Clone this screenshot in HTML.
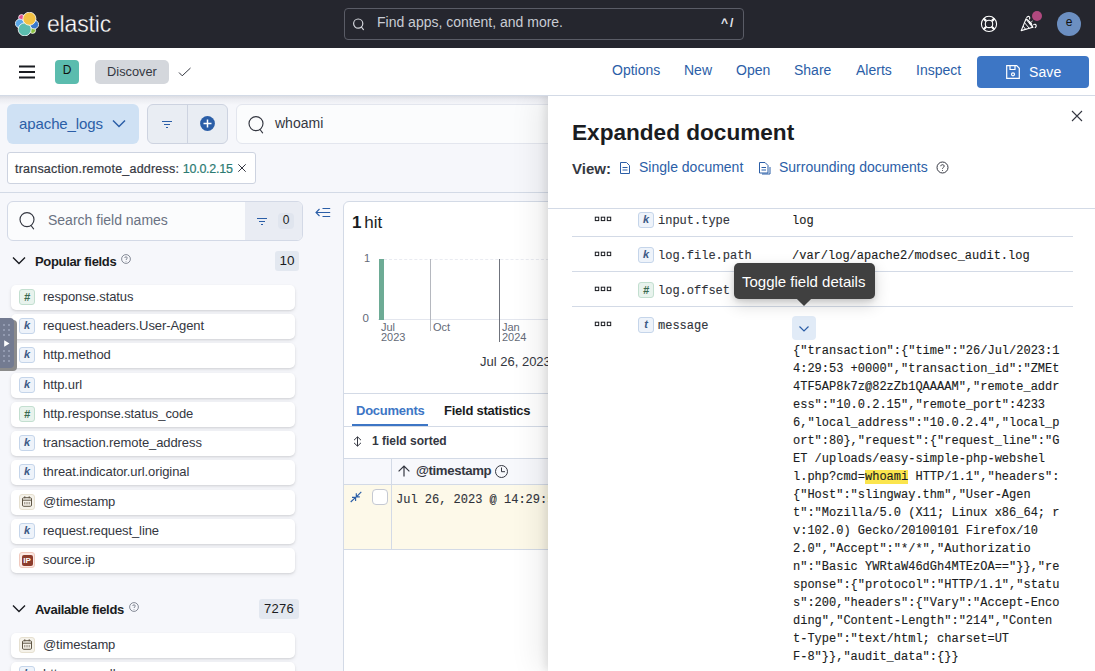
<!DOCTYPE html>
<html>
<head>
<meta charset="utf-8">
<style>
*{box-sizing:border-box;margin:0;padding:0}
html,body{width:1095px;height:671px;overflow:hidden;background:#f6f7fb;font-family:"Liberation Sans",sans-serif;color:#343741}
.abs{position:absolute}
#topbar{z-index:6;position:absolute;left:0;top:0;width:1095px;height:48px;background:#25262e}
#bar2{z-index:5;position:absolute;left:0;top:48px;width:1095px;height:48px;background:#fff;border-bottom:1px solid #d3dae6}
.navlink{position:absolute;top:62px;font-size:14px;color:#2b5ea7;line-height:18px}
#flyout{position:absolute;left:548px;top:96px;width:547px;height:575px;background:#fff;box-shadow:-3px 0 8px rgba(0,0,0,.09),-10px 0 28px rgba(0,0,0,.08)}
.frow{position:absolute;left:24px;width:501px;border-top:1px solid #d3dae6}
.mono{font-family:"Liberation Mono",monospace;font-size:12px;color:#1a1c21;-webkit-text-stroke:0.120px #1a1c21}
.field{position:absolute;left:11px;width:284px;height:25px;background:#fff;border-radius:5px;box-shadow:0 1px 2px rgba(0,0,0,.09),0 2px 4px rgba(0,0,0,.07);font-size:13px;line-height:24px;color:#343741;letter-spacing:-0.090px}
.field span.n{position:absolute;left:32px;top:0;white-space:nowrap}
.tok{position:absolute;left:4px;top:4px;width:16px;height:16px;border-radius:3px;border:1px solid #c5d5ea;background:#eef3fa;font-size:11px;line-height:13px;text-align:center;font-weight:bold;font-style:italic;color:#3c5a85;letter-spacing:0}
.tok.num{background:#e8f3ed;border-color:#c3dfd0;color:#39694f;font-size:11px;line-height:14px}
.tok.date{background:#f5f2ea;border-color:#e6e0d0;padding-top:0.500px;line-height:0}
.tok.ip{background:#fbeae5;border-color:#f0c9bd;line-height:0;padding:1.500px 1.500px}
.tok.ip span{display:block;width:11px;height:11px;border-radius:2px;background:#8c3c2c;color:#fff;font:bold 8px/11px "Liberation Sans",sans-serif;font-style:normal;text-align:center;letter-spacing:0}
mark{background:#fbe54d;color:inherit}
</style>
</head>
<body>
<div id="topbar">
<svg class="abs" style="left:15px;top:12px" width="24" height="24" viewBox="0 0 24 24" stroke="#fff" stroke-width="0.800">
<circle cx="6.600" cy="5.600" r="3" fill="#e0508f"/>
<circle cx="17.600" cy="18.400" r="3" fill="#8bbf3f"/>
<circle cx="4.800" cy="11.500" r="4.400" fill="#5aa8e8"/>
<circle cx="19.200" cy="12.500" r="4.400" fill="#3a78cc"/>
<circle cx="9.700" cy="17.400" r="6.500" fill="#5bbcae"/>
<circle cx="14.400" cy="6.700" r="6.500" fill="#f2c143"/>
</svg>
<div class="abs" style="left:47px;top:9px;font-size:24px;line-height:30px;color:#fff;letter-spacing:-0.2px;transform-origin:0 50%;transform:scaleX(0.96);-webkit-text-stroke:0.350px #25262e">elastic</div>
<div class="abs" style="left:344px;top:8px;width:400px;height:32px;border:1px solid #5a5c66;border-radius:4px;background:#25262e"></div>
<svg class="abs" style="left:351px;top:16px" width="16" height="16" viewBox="0 0 16 16" fill="none" stroke="#d4d6dc" stroke-width="1.2"><circle cx="7.2" cy="7.6" r="4.6"/><path d="M10.4 11l2 2.6" stroke-linecap="round"/></svg>
<div class="abs" style="left:377px;top:13px;font-size:14px;line-height:18px;color:#c9ccd4;white-space:nowrap">Find apps, content, and more.</div>
<div class="abs" style="left:721px;top:15px;font-size:12px;line-height:16px;color:#e6e8ee;font-weight:bold;letter-spacing:2px;white-space:nowrap">^/</div>
<svg class="abs" style="left:979px;top:14px" width="20" height="20" viewBox="0 0 20 20" fill="none" stroke="#fff" stroke-width="1.100"><circle cx="10" cy="9.900" r="7.600"/><circle cx="10" cy="9.900" r="3.700"/><path d="M12.76 12.76L15.30 15.30M7.24 12.76L4.70 15.30M7.24 7.24L4.70 4.70M12.76 7.24L15.30 4.70" stroke-width="2.200" transform="translate(0,-0.100)"/></svg>
<svg class="abs" style="left:1019px;top:14px" width="20" height="20" viewBox="0 0 20 20" fill="none" stroke="#fff" stroke-width="1.100" stroke-linejoin="round" stroke-linecap="round"><path d="M7 5L2.200 16.600l11.600-3.300z"/><path d="M7 5c1.800 0.300 6 4.500 6.800 8.300"/><path d="M5.600 8.800l4.600 5.400M4.200 12.300l2.400 3" stroke-width="1"/><path d="M7.800 3.600c0.300-1.300 2-1.600 2.700-0.600 0.400 0.600 0.400 1.400 0 2.100M14.700 10.600c1-0.700 2.300-0.200 2.500 0.900 0.100 0.800-0.300 1.600-1 2.200"/><path d="M13.300 7.200l-2.700 2.400M10.600 7.700v1.900h1.900" stroke-width="0.900"/></svg>
<div class="abs" style="left:1032px;top:11px;width:10px;height:10px;border-radius:5px;background:#b0497f"></div>
<div class="abs" style="left:1057px;top:12px;width:24px;height:24px;border-radius:12px;background:#6c8fc1;color:#111;font-size:12px;line-height:21px;text-align:center">e</div>
</div>
<div id="bar2">
<svg class="abs" style="left:18px;top:16px" width="18" height="16" viewBox="0 0 18 16" stroke="#1a1c21" stroke-width="1.8"><path d="M1 2.500h16M1 8h16M1 13.500h16"/></svg>
<div class="abs" style="left:55px;top:12px;width:24px;height:24px;border-radius:4px;background:#5bbcae;color:#111;font-size:12px;line-height:21px;text-align:center">D</div>
<div class="abs" style="left:95px;top:12px;width:74px;height:24px;border-radius:5px;background:#d4d7dc;color:#343741;font-size:12.800px;line-height:24px;text-align:center">Discover</div>
<svg class="abs" style="left:178px;top:19px" width="14" height="10" viewBox="0 0 14 10" fill="none" stroke="#343741" stroke-width="1"><path d="M1 5.500l3.200 3.300L12.500 1"/></svg>
<div class="navlink" style="left:612px;top:13px">Options</div>
<div class="navlink" style="left:684px;top:13px">New</div>
<div class="navlink" style="left:736px;top:13px">Open</div>
<div class="navlink" style="left:794px;top:13px">Share</div>
<div class="navlink" style="left:856px;top:13px">Alerts</div>
<div class="navlink" style="left:916px;top:13px">Inspect</div>
<div class="abs" style="left:977px;top:8px;width:112px;height:32px;border-radius:4px;background:#3d76c5"></div>
<svg class="abs" style="left:1005px;top:16px" width="16" height="16" viewBox="0 0 16 16" fill="none" stroke="#fff" stroke-width="1.200"><path d="M1.700 1.700h10l2.600 2.600v10H1.700z"/><path d="M5 1.700v3.800h5V1.700"/><circle cx="8" cy="10.300" r="1.500"/></svg>
<div class="abs" style="left:1029px;top:14px;font-size:14px;line-height:20px;color:#fff;letter-spacing:0.100px">Save</div>
</div>
<div class="abs" style="left:0;top:96px;width:1095px;height:9px;background:linear-gradient(rgba(40,45,70,.13),rgba(40,45,70,.05) 40%,rgba(40,45,70,0))"></div>
<div id="left">
<div class="abs" style="left:7px;top:104px;width:132px;height:40px;border-radius:6px;background:#cfe1f4"></div>
<div class="abs" style="left:19px;top:114px;font-size:15px;line-height:20px;color:#2b5ea7;white-space:nowrap;letter-spacing:-0.100px">apache_logs</div>
<svg class="abs" style="left:112px;top:119px" width="14" height="10" viewBox="0 0 14 10" fill="none" stroke="#2b5ea7" stroke-width="1.500"><path d="M1 1.500l6 6 6-6"/></svg>
<div class="abs" style="left:147px;top:104px;width:81px;height:40px;border-radius:6px;background:#e9edf3;border:1px solid #cdd3e0"></div>
<div class="abs" style="left:187px;top:105px;width:1px;height:38px;background:#cdd3e0"></div>
<svg class="abs" style="left:162px;top:120px" width="10" height="9" viewBox="0 0 10 9" stroke="#2b5ea7" stroke-width="1"><path d="M0 1.500h10M2 4.500h6M4 7.500h2"/></svg>
<svg class="abs" style="left:199px;top:115px" width="17" height="17" viewBox="0 0 17 17"><circle cx="8.500" cy="8.500" r="7.400" fill="#2b5ea7"/><path d="M8.500 4.500v8M4.500 8.500h8" stroke="#fff" stroke-width="1.500"/></svg>
<div class="abs" style="left:236px;top:104px;width:330px;height:40px;border-radius:6px;background:#fbfcfd;border:1px solid #e3e6ee"></div>
<svg class="abs" style="left:246px;top:114px" width="20" height="20" viewBox="0 0 20 20" fill="none" stroke="#343741" stroke-width="1.150"><circle cx="10" cy="9.600" r="7"/><path d="M14 15.500l2.600 3.300" stroke-linecap="round"/></svg>
<div class="abs" style="left:275px;top:113px;font-size:14px;line-height:20px;color:#343741">whoami</div>
<div class="abs" style="left:7px;top:152px;width:249px;height:32px;border-radius:3px;background:#fff;border:1px solid #cdd3e0"></div>
<div class="abs" style="left:15px;top:160px;font-size:12.500px;line-height:18px;color:#343741;white-space:nowrap;letter-spacing:0.210px;-webkit-text-stroke:0.200px">transaction.remote_address: <span style="color:#2c7b72;letter-spacing:-0.250px">10.0.2.15</span></div>
<svg class="abs" style="left:238px;top:164px" width="8" height="8" viewBox="0 0 8 8" stroke="#343741" stroke-width="1"><path d="M0.300 0.300l7.400 7.400M7.700 0.300l-7.400 7.400"/></svg>
<div class="abs" style="left:0;top:192px;width:548px;height:1px;background:#d3dae6"></div>
<div class="abs" style="left:7px;top:201px;width:296px;height:40px;border-radius:6px;background:#fbfcfd;border:1px solid #d3d9e6"></div>
<div class="abs" style="left:245px;top:202px;width:57px;height:38px;border-radius:0 5px 5px 0;background:#e9ecf3"></div>
<svg class="abs" style="left:17px;top:210px" width="20" height="20" viewBox="0 0 20 20" fill="none" stroke="#343741" stroke-width="1.150"><circle cx="10" cy="9.600" r="7"/><path d="M14 15.500l2.600 3.300" stroke-linecap="round"/></svg>
<div class="abs" style="left:48px;top:211px;font-size:14px;line-height:18px;color:#6a7282;white-space:nowrap">Search field names</div>
<svg class="abs" style="left:257px;top:217px" width="10" height="9" viewBox="0 0 10 9" stroke="#2b5ea7" stroke-width="1"><path d="M0 1.500h10M2 4.500h6M4 7.500h2"/></svg>
<div class="abs" style="left:278px;top:213px;width:16px;height:16px;border-radius:4px;background:#e0e5ee;font-size:12px;line-height:15px;text-align:center;color:#1a1c21">0</div>
<svg class="abs" style="left:315px;top:206px" width="16" height="14" viewBox="0 0 16 14" fill="none" stroke="#2b5ea7" stroke-width="1.100"><path d="M1.200 6.500h14M4.500 3L1 6.500 4.500 10M7.500 2.500h7.700M7.500 10.500h7.700"/></svg>
<svg class="abs" style="left:12px;top:256px" width="14" height="10" viewBox="0 0 14 10" fill="none" stroke="#1a1c21" stroke-width="1.400"><path d="M1 1.500l6 6 6-6"/></svg>
<div class="abs" style="left:35px;top:253px;font-size:13px;line-height:18px;color:#1a1c21;font-weight:bold;white-space:nowrap;letter-spacing:-0.330px">Popular fields</div>
<svg class="abs" style="left:121px;top:254px" width="10" height="10" viewBox="0 0 10 10" fill="none" stroke="#69707d" stroke-width="0.800"><circle cx="5" cy="5" r="4.400"/><path d="M3.700 4c0-1.600 2.600-1.600 2.600 0 0 0.900-1.300 0.900-1.300 2M5 7.300v0.600"/></svg>
<div class="abs" style="left:275px;top:251px;width:24px;height:20px;border-radius:3px;background:#e3e8f0;font-size:13.500px;line-height:20px;text-align:center;color:#1a1c21">10</div>
<svg class="abs" style="left:12px;top:604px" width="14" height="10" viewBox="0 0 14 10" fill="none" stroke="#1a1c21" stroke-width="1.400"><path d="M1 1.500l6 6 6-6"/></svg>
<div class="abs" style="left:35px;top:601px;font-size:13px;line-height:18px;color:#1a1c21;font-weight:bold;white-space:nowrap;letter-spacing:-0.330px">Available fields</div>
<svg class="abs" style="left:129px;top:602px" width="10" height="10" viewBox="0 0 10 10" fill="none" stroke="#69707d" stroke-width="0.800"><circle cx="5" cy="5" r="4.400"/><path d="M3.700 4c0-1.600 2.600-1.600 2.600 0 0 0.900-1.300 0.900-1.300 2M5 7.300v0.600"/></svg>
<div class="abs" style="left:259px;top:599px;width:40px;height:20px;border-radius:3px;background:#e3e8f0;font-size:13px;line-height:20px;text-align:center;color:#1a1c21;letter-spacing:0.300px">7276</div>
<div class="field" style="top:285px"><div class="tok num" style="left:8px;top:4px">#</div><span class="n">response.status</span></div>
<div class="field" style="top:314px"><div class="tok" style="left:8px;top:4px">k</div><span class="n">request.headers.User-Agent</span></div>
<div class="field" style="top:343px"><div class="tok" style="left:8px;top:4px">k</div><span class="n">http.method</span></div>
<div class="field" style="top:373px"><div class="tok" style="left:8px;top:4px">k</div><span class="n">http.url</span></div>
<div class="field" style="top:402px"><div class="tok num" style="left:8px;top:4px">#</div><span class="n">http.response.status_code</span></div>
<div class="field" style="top:431px"><div class="tok" style="left:8px;top:4px">k</div><span class="n">transaction.remote_address</span></div>
<div class="field" style="top:460px"><div class="tok" style="left:8px;top:4px">k</div><span class="n">threat.indicator.url.original</span></div>
<div class="field" style="top:490px"><div class="tok date" style="left:8px;top:4px"><svg width="10" height="11" viewBox="0 0 10 11" fill="none" stroke="#5e5545" stroke-width="1"><rect x="0.500" y="1.700" width="9" height="8.600" rx="1.200"/><path d="M0.500 4.200h9M2.800 0.300v2M7.200 0.300v2" /><path d="M2.800 6v2.400M5 6v2.400M7.200 6v2.400" stroke-width="0.700"/></svg></div><span class="n">@timestamp</span></div>
<div class="field" style="top:519px"><div class="tok" style="left:8px;top:4px">k</div><span class="n">request.request_line</span></div>
<div class="field" style="top:548px"><div class="tok ip" style="left:8px;top:4px"><span>IP</span></div><span class="n">source.ip</span></div>
<div class="field" style="top:633px"><div class="tok date" style="left:8px;top:4px"><svg width="10" height="11" viewBox="0 0 10 11" fill="none" stroke="#5e5545" stroke-width="1"><rect x="0.500" y="1.700" width="9" height="8.600" rx="1.200"/><path d="M0.500 4.200h9M2.800 0.300v2M7.200 0.300v2" /><path d="M2.800 6v2.400M5 6v2.400M7.200 6v2.400" stroke-width="0.700"/></svg></div><span class="n">@timestamp</span></div>
<div class="field" style="top:662px"><div class="tok" style="left:8px;top:4px">k</div><span class="n">http.score.all</span></div>

<div class="abs" style="left:0;top:320px;width:17px;height:51px;border-radius:0 4px 4px 0;background:#8b8b8b"></div>
<div class="abs" style="left:0;top:318px;width:14px;height:50px;border-radius:0 4px 4px 0;background:#737b91"></div><div class="abs" style="left:3px;top:324px;width:2px;height:2px;background:#929ab0"></div><div class="abs" style="left:8px;top:324px;width:2px;height:2px;background:#929ab0"></div><div class="abs" style="left:3px;top:329px;width:2px;height:2px;background:#929ab0"></div><div class="abs" style="left:8px;top:329px;width:2px;height:2px;background:#929ab0"></div><div class="abs" style="left:3px;top:334px;width:2px;height:2px;background:#929ab0"></div><div class="abs" style="left:8px;top:334px;width:2px;height:2px;background:#929ab0"></div><div class="abs" style="left:3px;top:350px;width:2px;height:2px;background:#929ab0"></div><div class="abs" style="left:8px;top:350px;width:2px;height:2px;background:#929ab0"></div><div class="abs" style="left:3px;top:355px;width:2px;height:2px;background:#929ab0"></div><div class="abs" style="left:8px;top:355px;width:2px;height:2px;background:#929ab0"></div><div class="abs" style="left:3px;top:360px;width:2px;height:2px;background:#929ab0"></div><div class="abs" style="left:8px;top:360px;width:2px;height:2px;background:#929ab0"></div>
<svg class="abs" style="left:4px;top:340px" width="6" height="7" viewBox="0 0 6 7"><path d="M0.200 0.200l5.300 3.300-5.300 3.300z" fill="#fff"/></svg>
</div>
<div id="main">
<div class="abs" style="left:343px;top:201px;width:240px;height:480px;border-radius:6px 0 0 0;background:#fff;border:1px solid #d3dae6"></div>
<div class="abs" style="left:352px;top:212px;font-size:17px;line-height:22px;color:#1a1c21;white-space:nowrap;word-spacing:-2px"><b>1</b> hit</div>
<div class="abs" style="left:360px;top:251px;width:10px;font-size:11px;line-height:14px;color:#646a77;text-align:right">1</div>
<div class="abs" style="left:359px;top:311px;width:10px;font-size:11.500px;line-height:14px;color:#646a77;text-align:right">0</div>
<div class="abs" style="left:384px;top:259px;width:170px;height:0;border-top:1px dashed #e9ebf1"></div>
<div class="abs" style="left:378px;top:319px;width:176px;height:1px;background:#e3e6ee"></div>
<div class="abs" style="left:379px;top:259px;width:5px;height:61px;background:#6dab95"></div>
<div class="abs" style="left:430px;top:259px;width:1px;height:72px;background:#b5b8bf"></div>
<div class="abs" style="left:499px;top:259px;width:1px;height:83px;background:#6f737c"></div>
<div class="abs" style="left:381px;top:322px;font-size:11px;line-height:10px;color:#646a77">Jul<br>2023</div>
<div class="abs" style="left:433px;top:322px;font-size:11px;line-height:10px;color:#646a77">Oct</div>
<div class="abs" style="left:502px;top:322px;font-size:11px;line-height:10px;color:#646a77">Jan<br>2024</div>
<div class="abs" style="left:480px;top:353px;font-size:13px;line-height:18px;color:#343741;white-space:nowrap">Jul 26, 2023 @</div>
<div class="abs" style="left:344px;top:393px;width:210px;height:1px;background:#d3dae6"></div>
<div class="abs" style="left:356px;top:402px;font-size:13px;line-height:18px;color:#3d76c5;font-weight:bold;white-space:nowrap;letter-spacing:-0.250px">Documents</div>
<div class="abs" style="left:444px;top:402px;font-size:13px;line-height:18px;color:#1a1c21;font-weight:bold;white-space:nowrap;letter-spacing:-0.250px">Field statistics</div>
<div class="abs" style="left:352px;top:424px;width:76px;height:2px;background:#3d76c5"></div>
<div class="abs" style="left:344px;top:426px;width:210px;height:1px;background:#d3dae6"></div>
<svg class="abs" style="left:353px;top:436px" width="9" height="11" viewBox="0 0 9 11" fill="none" stroke="#343741" stroke-width="1"><path d="M4.500 1v9M1 4.200L4.500 0.800 8 4.200M1 6.800l3.500 3.400L8 6.800"/></svg>
<div class="abs" style="left:372px;top:433px;font-size:12px;line-height:16px;color:#343741;font-weight:bold;white-space:nowrap">1 field sorted</div>
<div class="abs" style="left:344px;top:458px;width:210px;height:27px;background:#f7f8fc;border-top:1px solid #d3dae6;border-bottom:1px solid #d3dae6"></div>
<div class="abs" style="left:344px;top:485px;width:210px;height:65px;background:#fdf9e9;border-bottom:1px solid #d3dae6"></div>
<div class="abs" style="left:391px;top:459px;width:1px;height:91px;background:#d3dae6"></div>
<svg class="abs" style="left:398px;top:465px" width="12" height="12" viewBox="0 0 12 12" fill="none" stroke="#343741" stroke-width="1.200"><path d="M6 11.500V1.200M0.600 6.400L6 1l5.400 5.400"/></svg>
<div class="abs" style="left:416px;top:462px;font-size:13.200px;line-height:18px;color:#343741;font-weight:bold;white-space:nowrap;letter-spacing:-0.350px">@timestamp</div>
<svg class="abs" style="left:494px;top:464px" width="15" height="15" viewBox="0 0 15 15" fill="none" stroke="#343741" stroke-width="1"><circle cx="7.500" cy="7.500" r="6"/><path d="M7.500 3.500v4.200h3.500"/></svg>
<svg class="abs" style="left:350px;top:491px" width="12" height="12" viewBox="0 0 12 12" fill="none" stroke="#2b5ea7" stroke-width="1.150"><path d="M11.300 0.900L6.400 5.800M6.300 2.300v3.500h3.500M0.700 11l4.900-4.700M2 6.400h3.600v3.500"/></svg>
<div class="abs" style="left:372px;top:489px;width:16px;height:16px;border-radius:4px;background:#fff;border:1px solid #c5c9d3"></div>
<div class="abs mono" style="left:396px;top:491px;line-height:18px;white-space:nowrap;color:#343741">Jul 26, 2023 @ 14:29:53</div>
</div>
<div id="flyout">
<svg class="abs" style="left:523px;top:14px" width="12" height="12" viewBox="0 0 12 12" stroke="#343741" stroke-width="1.100"><path d="M1 1l10 10M11 1L1 11"/></svg>
<div class="abs" style="left:24px;top:23px;font-size:22.600px;line-height:28px;font-weight:bold;color:#1a1c21;white-space:nowrap">Expanded document</div>
<div class="abs" style="left:24px;top:63px;font-size:15px;line-height:20px;font-weight:bold;color:#343741">View:</div>
<svg class="abs" style="left:71px;top:65px" width="12" height="14" viewBox="0 0 12 14" fill="none" stroke="#2b5ea7" stroke-width="1"><path d="M1.500 1.500h6l3 3v8h-9z"/><path d="M3.500 6.500h5M3.500 9h5"/></svg>
<div class="abs" style="left:91px;top:61px;font-size:14px;line-height:20px;color:#2b5ea7;white-space:nowrap">Single document</div>
<svg class="abs" style="left:210px;top:65px" width="13" height="14" viewBox="0 0 13 14" fill="none" stroke="#2b5ea7" stroke-width="1"><path d="M1.500 1.500h5.500l3 3v7.500h-8.500z"/><path d="M3.500 6.500h4.500M3.500 9h4.500M4 13h8V6"/></svg>
<div class="abs" style="left:231px;top:61px;font-size:14px;line-height:20px;color:#2b5ea7;white-space:nowrap">Surrounding documents</div>
<svg class="abs" style="left:388px;top:65px" width="13" height="13" viewBox="0 0 13 13" fill="none" stroke="#343741" stroke-width="1"><circle cx="6.500" cy="6.500" r="5.500"/><path d="M4.800 5.200c0-2 3.400-2 3.400 0 0 1.200-1.700 1.200-1.700 2.500M6.500 9.200v0.800"/></svg>
<div class="abs" style="left:0;top:112px;width:547px;height:1px;background:#d3dae6"></div>
<div class="abs" style="left:0;top:113px;width:547px;height:462px;overflow:hidden"><div class="abs" style="left:0;top:-113px;width:547px;height:700px">
<svg class="abs" style="left:46px;top:120px" width="18" height="6" viewBox="0 0 18 6" fill="none" stroke="#1a1c21" stroke-width="1"><rect x="1.300" y="1.200" width="3.400" height="3.400"/><rect x="7.300" y="1.200" width="3.400" height="3.400"/><rect x="13.300" y="1.200" width="3.400" height="3.400"/></svg><div class="tok" style="left:90px;top:116px">k</div><div class="abs mono" style="left:110px;top:116px;line-height:18px;white-space:nowrap;color:#343741">input.type</div><div class="abs mono" style="left:244px;top:116px;line-height:18px;white-space:nowrap">log</div><div class="frow" style="top:140px"></div><svg class="abs" style="left:46px;top:155px" width="18" height="6" viewBox="0 0 18 6" fill="none" stroke="#1a1c21" stroke-width="1"><rect x="1.300" y="1.200" width="3.400" height="3.400"/><rect x="7.300" y="1.200" width="3.400" height="3.400"/><rect x="13.300" y="1.200" width="3.400" height="3.400"/></svg><div class="tok" style="left:90px;top:151px">k</div><div class="abs mono" style="left:110px;top:151px;line-height:18px;white-space:nowrap;color:#343741">log.file.path</div><div class="abs mono" style="left:244px;top:151px;line-height:18px;white-space:nowrap">/var/log/apache2/modsec_audit.log</div><div class="frow" style="top:175px"></div><svg class="abs" style="left:46px;top:190px" width="18" height="6" viewBox="0 0 18 6" fill="none" stroke="#1a1c21" stroke-width="1"><rect x="1.300" y="1.200" width="3.400" height="3.400"/><rect x="7.300" y="1.200" width="3.400" height="3.400"/><rect x="13.300" y="1.200" width="3.400" height="3.400"/></svg><div class="tok num" style="left:90px;top:186px">#</div><div class="abs mono" style="left:110px;top:186px;line-height:18px;white-space:nowrap;color:#343741">log.offset</div><div class="frow" style="top:210px"></div><svg class="abs" style="left:46px;top:225px" width="18" height="6" viewBox="0 0 18 6" fill="none" stroke="#1a1c21" stroke-width="1"><rect x="1.300" y="1.200" width="3.400" height="3.400"/><rect x="7.300" y="1.200" width="3.400" height="3.400"/><rect x="13.300" y="1.200" width="3.400" height="3.400"/></svg><div class="tok" style="left:90px;top:221px">t</div><div class="abs mono" style="left:110px;top:221px;line-height:18px;white-space:nowrap;color:#343741">message</div>
<div class="abs" style="left:244px;top:220px;width:24px;height:24px;border-radius:4px;background:#e1ebf7"></div>
<svg class="abs" style="left:250px;top:229px" width="12" height="8" viewBox="0 0 12 8" fill="none" stroke="#2b5ea7" stroke-width="1.200"><path d="M1.500 1.500l4.500 4.500 4.500-4.500"/></svg>
<div class="abs mono" style="left:245px;top:246px;line-height:18px;white-space:pre">{"transaction":{"time":"26/Jul/2023:1
4:29:53 +0000","transaction_id":"ZMEt
4TF5AP8k7z@82zZb1QAAAAM","remote_addr
ess":"10.0.2.15","remote_port":4233
6,"local_address":"10.0.2.4","local_p
ort":80},"request":{"request_line":"G
ET /uploads/easy-simple-php-webshel
l.php?cmd=<mark>whoami</mark> HTTP/1.1","headers":
{"Host":"slingway.thm","User-Agen
t":"Mozilla/5.0 (X11; Linux x86_64; r
v:102.0) Gecko/20100101 Firefox/10
2.0","Accept":"*/*","Authorizatio
n":"Basic YWRtaW46dGh4MTEzOA=="}},"re
sponse":{"protocol":"HTTP/1.1","statu
s":200,"headers":{"Vary":"Accept-Enco
ding","Content-Length":"214","Conten
t-Type":"text/html; charset=UT
F-8"}},"audit_data":{}}</div>
<div class="abs" style="left:186px;top:167px;width:141px;height:36px;border-radius:5px;background:#404040;box-shadow:0 6px 16px rgba(0,0,0,.16),0 2px 5px rgba(0,0,0,.12)"></div>
<div class="abs" style="left:251px;top:197.500px;width:10px;height:10px;background:#404040;transform:rotate(45deg)"></div>
<div class="abs" style="left:194px;top:177px;font-size:15px;line-height:18px;color:#fff;white-space:nowrap">Toggle field details</div>
</div></div>
</div>
</body>
</html>
